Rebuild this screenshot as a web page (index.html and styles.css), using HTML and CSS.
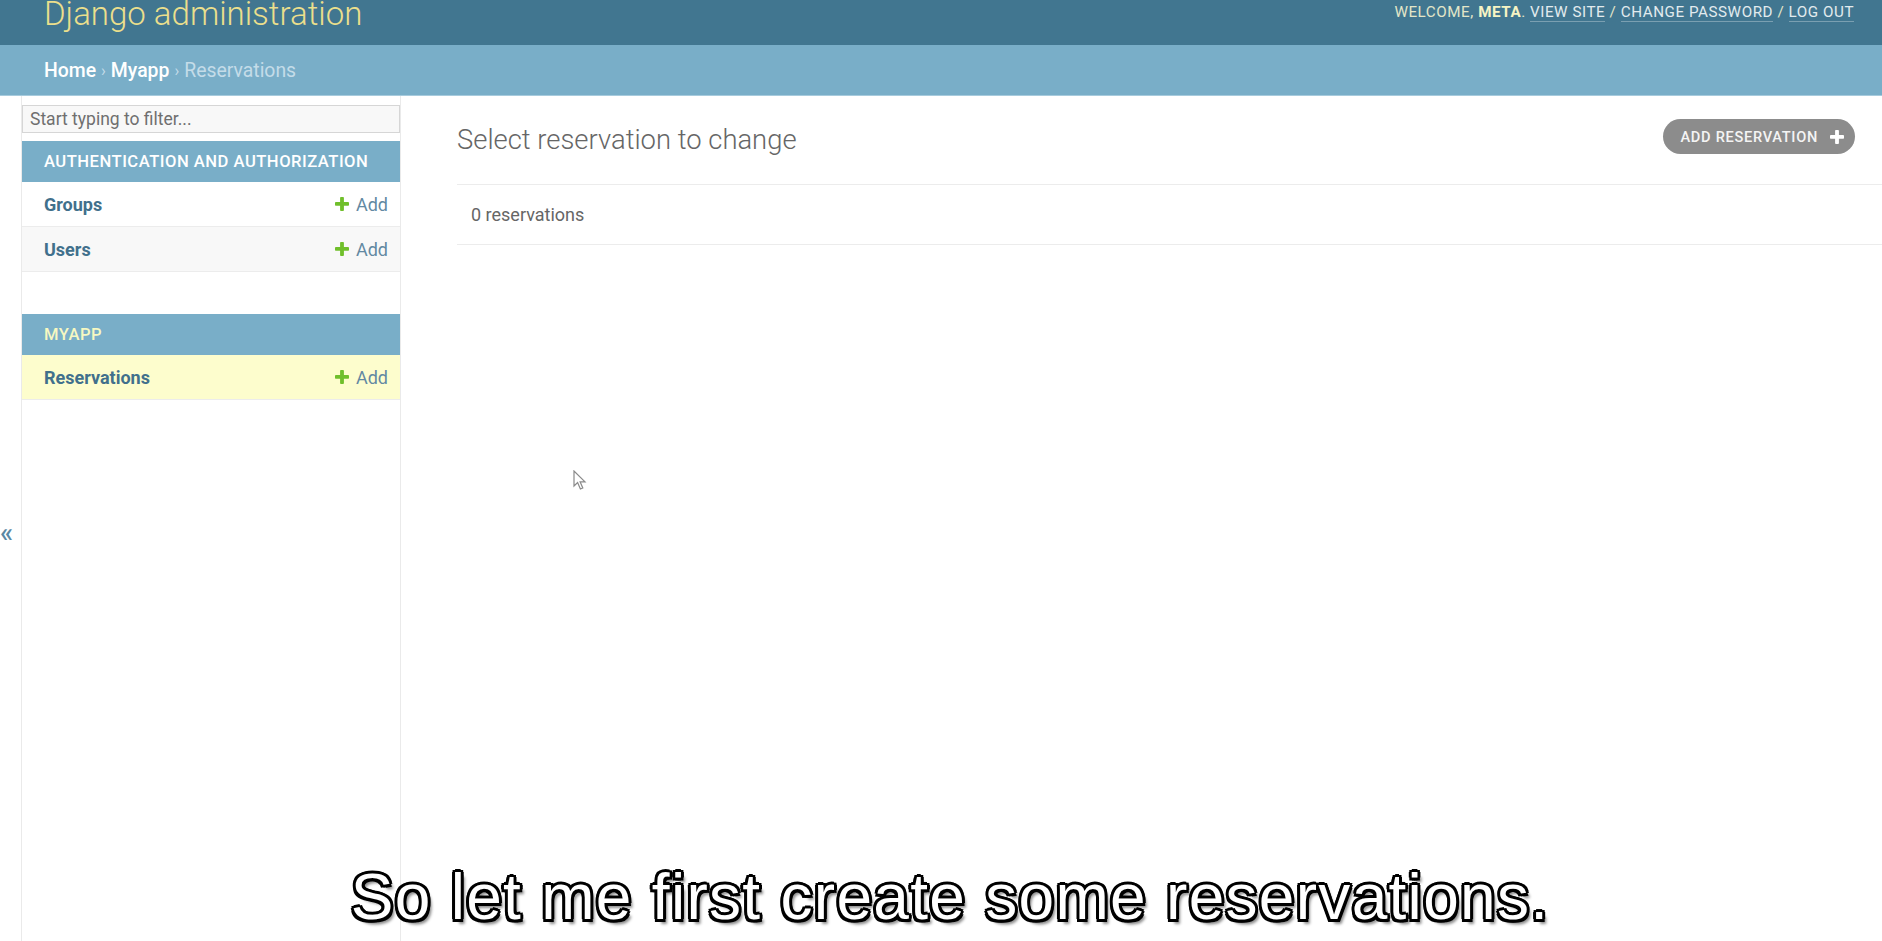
FILE: index.html
```html
<!DOCTYPE html>
<html lang="en">
<head>
<meta charset="utf-8">
<title>Select reservation to change | Django site admin</title>
<link rel="stylesheet" href="styles.css">
</head>
<body>
<div class="page">
  <header class="header">
    <h1 class="site-name">Django administration</h1>
    <div class="user-tools">WELCOME, <strong>META</strong>. <a href="#">VIEW SITE</a> / <a href="#">CHANGE PASSWORD</a> / <a href="#">LOG OUT</a></div>
  </header>
  <nav class="breadcrumbs">
    <a href="#">Home</a><span class="sep">›</span><a href="#">Myapp</a><span class="sep">›</span><span class="current">Reservations</span>
  </nav>
  <div class="main">
    <button class="toggle" type="button">«</button>
    <aside class="sidebar">
      <input class="filter" type="search" placeholder="Start typing to filter...">
      <div class="module">
        <div class="caption">Authentication and Authorization</div>
        <div class="row"><a class="model" href="#">Groups</a><a class="addlink" href="#"><svg viewBox="192 192 1408 1408" class="plus"><path d="M1600 796v192q0 40-28 68t-68 28h-416v416q0 40-28 68t-68 28h-192q-40 0-68-28t-28-68v-416h-416q-40 0-68-28t-28-68v-192q0-40 28-68t68-28h416v-416q0-40 28-68t68-28h192q40 0 68 28t28 68v416h416q40 0 68 28t28 68z"/></svg>Add</a></div>
        <div class="row alt"><a class="model" href="#">Users</a><a class="addlink" href="#"><svg viewBox="192 192 1408 1408" class="plus"><path d="M1600 796v192q0 40-28 68t-68 28h-416v416q0 40-28 68t-68 28h-192q-40 0-68-28t-28-68v-416h-416q-40 0-68-28t-28-68v-192q0-40 28-68t68-28h416v-416q0-40 28-68t68-28h192q40 0 68 28t28 68v416h416q40 0 68 28t28 68z"/></svg>Add</a></div>
      </div>
      <div class="module">
        <div class="caption current-app">Myapp</div>
        <div class="row current"><a class="model" href="#">Reservations</a><a class="addlink" href="#"><svg viewBox="192 192 1408 1408" class="plus"><path d="M1600 796v192q0 40-28 68t-68 28h-416v416q0 40-28 68t-68 28h-192q-40 0-68-28t-28-68v-416h-416q-40 0-68-28t-28-68v-192q0-40 28-68t68-28h416v-416q0-40 28-68t68-28h192q40 0 68 28t28 68v416h416q40 0 68 28t28 68z"/></svg>Add</a></div>
      </div>
    </aside>
    <section class="content">
      <div class="content-head">
        <h1 class="title">Select reservation to change</h1>
        <a class="add-btn" href="#">Add reservation<svg viewBox="192 192 1408 1408" class="btn-plus"><path d="M1600 796v192q0 40-28 68t-68 28h-416v416q0 40-28 68t-68 28h-192q-40 0-68-28t-28-68v-416h-416q-40 0-68-28t-28-68v-192q0-40 28-68t68-28h416v-416q0-40 28-68t68-28h192q40 0 68 28t28 68v416h416q40 0 68 28t28 68z"/></svg></a>
      </div>
      <div class="paginator">0 reservations</div>
    </section>
  </div>
  <svg class="cursor" viewBox="0 0 14 21" width="14" height="21"><path d="M1 1 L1 16 L4.6 12.6 L7.4 19 L9.8 18 L7.1 11.8 L12 11.8 Z"/></svg>
  <div class="subtitle">So let me first create some reservations.</div>
</div>
</body>
</html>
```
FILE: styles.css
```css
* { box-sizing: border-box; }
html, body { margin: 0; padding: 0; }
body {
  font-family: Roboto, "Liberation Sans", sans-serif;
  background: #fff;
  color: #333;
  overflow: hidden;
}
a { text-decoration: none; }
.page { position: relative; width: 1882px; height: 941px; }

.header {
  height: 45px;
  background: #417690;
  display: flex;
  justify-content: space-between;
  align-items: flex-start;
  padding: 0 28px 0 44px;
}
.site-name {
  margin: 0;
  font-size: 33px;
  line-height: 28px;
  font-weight: 300;
  color: #ebdf8c;
}
.user-tools {
  font-size: 15.2px;
  line-height: 24px;
  letter-spacing: 0.55px;
  color: #e3e6c8;
}
.user-tools strong { color: #f6f4c4; font-weight: 700; }
.user-tools a {
  color: #e2ebee;
  border-bottom: 1px solid rgba(255,255,255,0.3);
}

.breadcrumbs {
  height: 51px;
  background: #79aec8;
  border-bottom: 1px solid #a7cbdd;
  display: flex;
  align-items: center;
  padding-left: 44px;
  font-size: 19.4px;
}
.breadcrumbs a { color: #fff; font-weight: 500; }
.breadcrumbs .sep { color: #c4dce8; margin: 0 5px; font-size: 16px; }
.breadcrumbs .current { color: #c4dce8; }

.main { display: flex; height: 845px; }
.toggle {
  width: 22px;
  flex: none;
  border: 0;
  border-right: 1px solid #eaeaea;
  background: #fff;
  padding: 29px 0 0 0;
  display: flex;
  align-items: center;
  justify-content: flex-start;
  font-family: Roboto, sans-serif;
  font-size: 27px;
  font-weight: 500;
  color: #5b88a3;
}
.sidebar {
  width: 379px;
  flex: none;
  border-right: 1px solid #eaeaea;
  padding-top: 9px;
}
.filter {
  display: block;
  width: 378px;
  height: 28px;
  margin: 0;
  padding: 0 7px;
  border: 1px solid #d6d6d6;
  background: #f8f8f8;
  font-family: Roboto, sans-serif;
  font-size: 17.5px;
  color: #333;
  outline: none;
}
.filter::placeholder { color: #6f6f6f; }
.module { width: 378px; margin-top: 8px; margin-bottom: 42px; }
.module + .module { margin-top: 0; }
.caption {
  height: 41px;
  background: #79aec8;
  color: #fff;
  padding-left: 22px;
  font-size: 16.6px;
  line-height: 41px;
  font-weight: 500;
  letter-spacing: 0.5px;
  text-transform: uppercase;
}
.caption.current-app { color: #f6f8c2; }
.row {
  height: 45px;
  display: flex;
  align-items: center;
  justify-content: space-between;
  padding: 0 12px 0 22px;
  border-bottom: 1px solid #ececec;
  background: #fff;
}
.row.alt { background: #f8f8f8; }
.row.current { background: #fdfdcd; }
.model { color: #41708c; font-weight: 700; font-size: 18px; }
.addlink {
  display: flex;
  align-items: center;
  gap: 7px;
  color: #6389a2;
  font-size: 18px;
}
.plus { width: 14px; height: 14px; fill: #70bf2b; }

.content { flex: 1; padding: 23px 0 0 56px; }
.content-head {
  display: flex;
  justify-content: space-between;
  align-items: flex-start;
}
.title {
  margin: 4px 0 0;
  font-size: 27.4px;
  line-height: 34px;
  font-weight: 300;
  color: #666;
}
.add-btn {
  display: flex;
  align-items: center;
  gap: 12px;
  height: 35px;
  margin-right: 27px;
  padding: 0 11px 0 17px;
  border-radius: 18px;
  background: #8c8c8c;
  color: #f4f4f4;
  font-size: 14.6px;
  font-weight: 500;
  letter-spacing: 0.7px;
  text-transform: uppercase;
}
.btn-plus { width: 14px; height: 14px; fill: #fff; }
.paginator {
  margin-top: 27px;
  height: 61px;
  border-top: 1px solid #ececec;
  border-bottom: 1px solid #ececec;
  padding-left: 14px;
  line-height: 59px;
  font-size: 18px;
  color: #666;
}

.cursor {
  position: absolute;
  left: 573px;
  top: 470px;
  fill: #fff;
  stroke: #8a8a8a;
  stroke-width: 1.2;
}
.subtitle {
  position: absolute;
  left: 0;
  right: 0;
  top: 865px;
  padding-left: 18px;
  text-align: center;
  font-family: "Liberation Sans", Arial, sans-serif;
  font-size: 64px;
  line-height: 64px;
  letter-spacing: 1.3px;
  color: #fff;
  white-space: nowrap;
  text-shadow:
    -2.5px -2.5px 0 #000, 2.5px -2.5px 0 #000, -2.5px 2.5px 0 #000, 2.5px 2.5px 0 #000,
    0 -3px 0 #000, 0 3px 0 #000, -3px 0 0 #000, 3px 0 0 #000,
    4px 5px 3px rgba(0,0,0,0.45);
}
```
